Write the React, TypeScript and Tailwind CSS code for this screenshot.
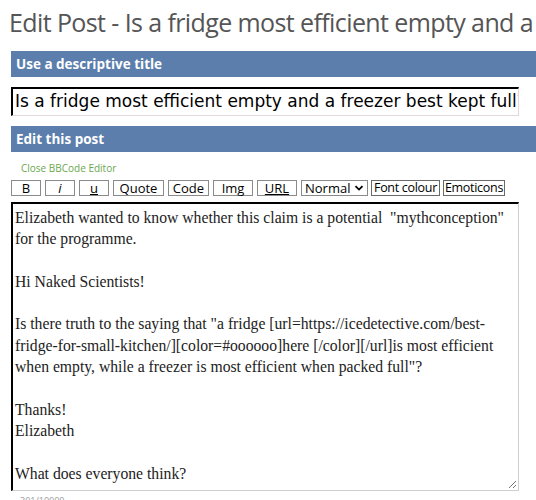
import React from 'react';

const lines = [
  'Elizabeth wanted to know whether this claim is a potential  "mythconception"',
  'for the programme.',
  '',
  'Hi Naked Scientists!',
  '',
  'Is there truth to the saying that "a fridge [url=https://icedetective.com/best-',
  'fridge-for-small-kitchen/][color=#oooooo]here [/color][/url]is most efficient',
  'when empty, while a freezer is most efficient when packed full"?',
  '',
  'Thanks!',
  'Elizabeth',
  '',
  'What does everyone think?',
];

const tools = [
  { label: 'B', w: 'w-[30px]' },
  { label: 'i', w: 'w-[30px]', cls: 'italic' },
  { label: 'u', w: 'w-[30px]', cls: 'underline' },
  { label: 'Quote', w: 'w-[51px]' },
  { label: 'Code', w: 'w-[41px]' },
  { label: 'Img', w: 'w-[40px]' },
  { label: 'URL', w: 'w-[40px]', cls: 'underline' },
];

function Bar({ children }: { children: React.ReactNode }) {
  return (
    <div className="ml-[11px] flex h-[26px] items-center bg-[#5b7eac] pl-[5px] text-[13.5px] font-bold text-white">
      {children}
    </div>
  );
}

export default function App() {
  return (
    <div className="h-[500px] w-[536px] overflow-hidden bg-white font-['Open_Sans',sans-serif]">
      <h1 className="ml-[9px] whitespace-nowrap pt-[2px] text-[25px] leading-[40px] tracking-[-0.6px] text-[#555]">
        Edit Post - Is a fridge most efficient empty and a freezer best kept full?
      </h1>

      <div className="mt-[9px]">
        <Bar>Use a descriptive title</Bar>
      </div>

      <div className="ml-[11px] mt-[10px] flex h-[29px] w-[508px] items-center overflow-hidden border-b border-l-2 border-r border-t-2 border-b-[#e4d8dc] border-l-black border-r-[#e4d8dc] border-t-black pl-[2px] font-['DejaVu_Sans',sans-serif] text-[17px] whitespace-nowrap text-black">
        Is a fridge most efficient empty and a freezer best kept full?
      </div>

      <div className="mt-[10px]">
        <Bar>Edit this post</Bar>
      </div>

      <div className="ml-[21px] mt-[10px] text-[10px] leading-[12px] text-[#6aa84f]">Close BBCode Editor</div>

      <div className="ml-[11px] mt-[6px] flex h-[16px] items-stretch text-[13px] leading-none text-black">
        {tools.map((t) => (
          <div
            key={t.label}
            className={`mr-[4px] flex ${t.w} items-center justify-center border border-[#8a8a8a] bg-white`}
          >
            <span className={t.cls}>{t.label}</span>
          </div>
        ))}
        <div className="mr-[3px] flex w-[67px] items-center justify-between border border-[#8a8a8a] bg-white px-[3px]">
          <span>Normal</span>
          <svg width="10" height="8" viewBox="0 0 10 8" fill="none" stroke="black" strokeWidth="1.8">
            <path d="M1.5 2.2 L5 5.6 L8.5 2.2" />
          </svg>
        </div>
        <div className="mr-[3px] flex w-[69px] items-center justify-center whitespace-nowrap border border-[#6a6a6a] bg-white text-[12.5px] tracking-[-0.3px]">
          Font colour
        </div>
        <div className="flex w-[62px] items-center justify-center border border-[#6a6a6a] bg-white text-[12.5px] tracking-[-0.3px]">
          Emoticons
        </div>
      </div>

      <div className="relative ml-[11px] mt-[6px] h-[289px] w-[508px] overflow-hidden border-b border-l-2 border-r border-t-2 border-b-[#cfcfcf] border-l-black border-r-[#cfcfcf] border-t-black bg-white px-[2px] pt-[3px] font-['Liberation_Serif',serif] text-[15.7px] leading-[21.3px] text-[#222]">
        {lines.map((l, i) => (
          <div key={i} className="h-[21.3px] whitespace-pre">
            {l}
          </div>
        ))}
        <svg className="absolute bottom-[1px] right-[1px]" width="10" height="10" viewBox="0 0 10 10" stroke="#777" strokeWidth="1">
          <path d="M9 2 L2 9 M9 6 L6 9" />
        </svg>
      </div>

      <div className="ml-[20px] mt-[3px] text-[9px] text-[#999]">301/10000</div>
    </div>
  );
}
